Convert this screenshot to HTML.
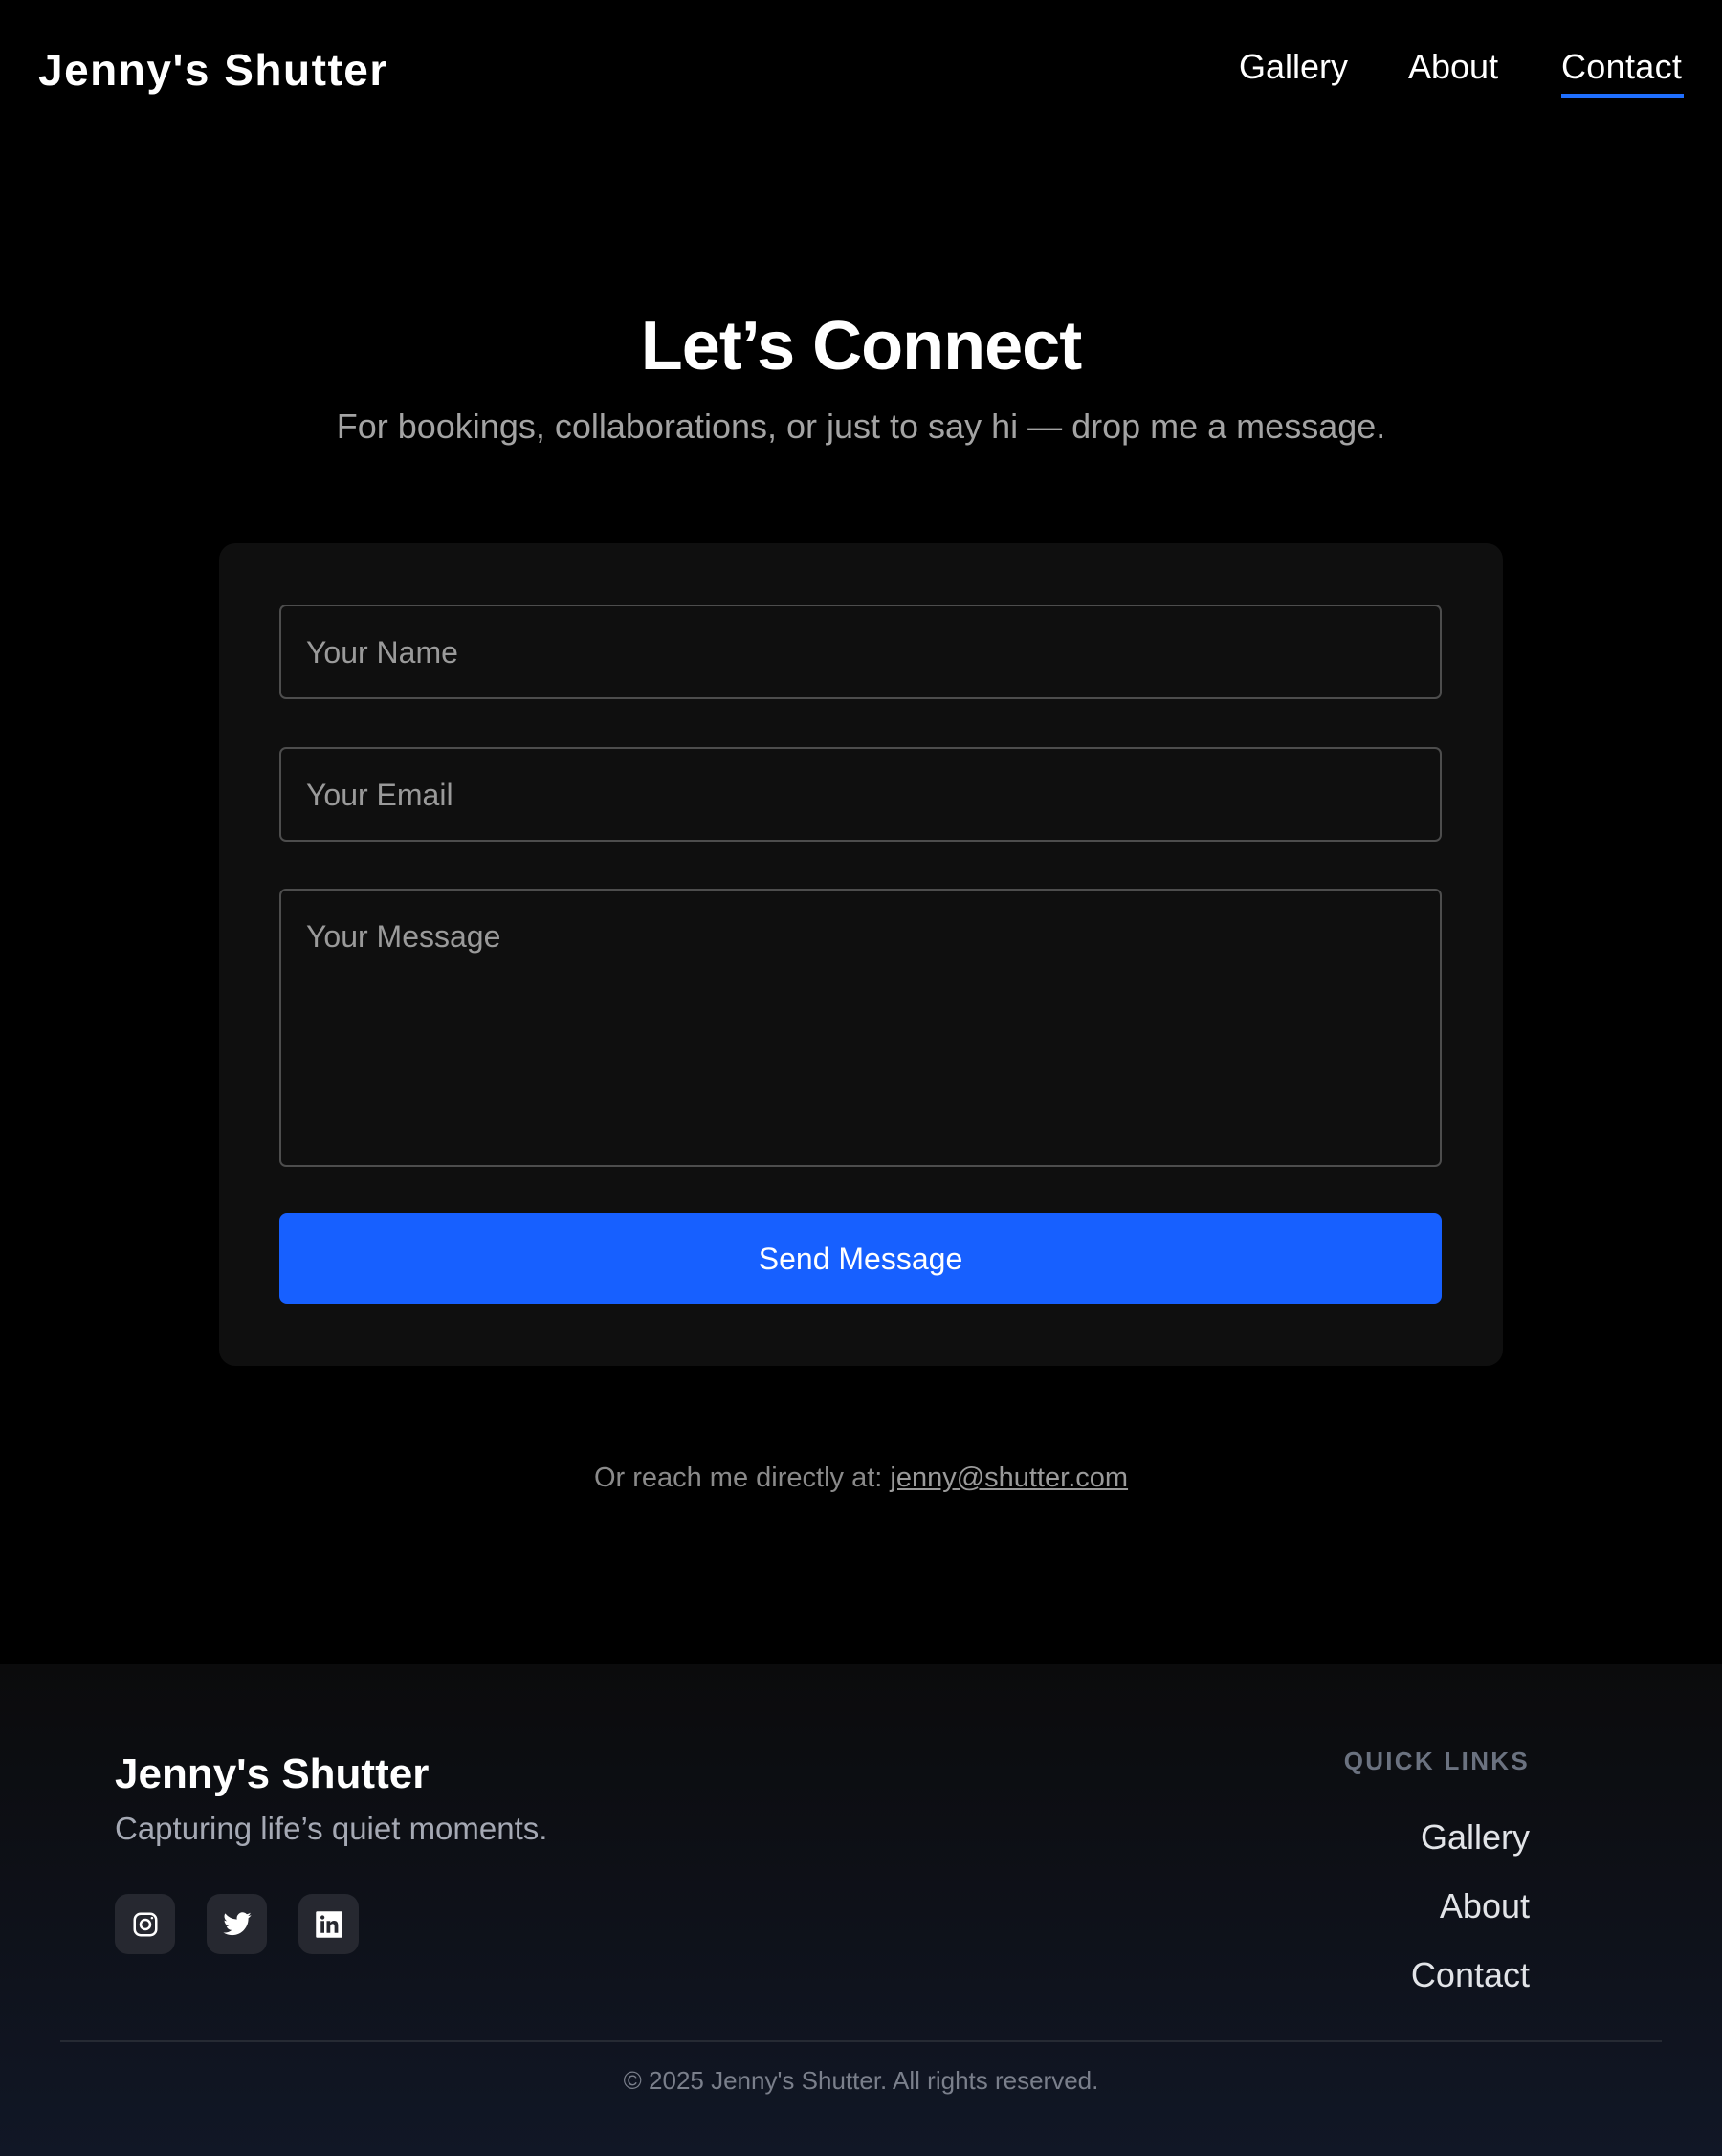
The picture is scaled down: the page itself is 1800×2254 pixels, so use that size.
<!DOCTYPE html>
<html><head><meta charset="utf-8"><style>
*{box-sizing:border-box;margin:0;padding:0}
body{width:1800px;height:2254px;background:#000;font-family:"Liberation Sans",sans-serif;color:#fff;position:relative;overflow:hidden}
.abs{position:absolute}
.logo{left:40px;top:46px;font-size:46px;font-weight:bold;letter-spacing:1.5px}
.nav{top:49px;font-size:36px;color:#fff}
.h1{left:0;width:1800px;text-align:center;top:321px;font-size:72px;font-weight:bold;letter-spacing:-1px}
.sub{left:0;width:1800px;text-align:center;top:425px;font-size:36px;color:#a3a3a3}
.card{left:229px;top:568px;width:1342px;height:860px;background:#0f0f0f;border-radius:17px}
.inp{left:292px;width:1215px;border:2px solid #4d4d4d;border-radius:7px;background:#0f0f0f;color:#9a9a9a;font-size:32px;padding-left:26px}
.btn{left:292px;top:1268px;width:1215px;height:95px;background:#1760ff;border-radius:8px;text-align:center;line-height:97px;font-size:32px;color:#fff}
.reach{left:0;width:1800px;text-align:center;top:1529px;font-size:29px;color:#8a8a8a}
.reach u{color:#9a9a9a}
.footer{left:0;top:1740px;width:1800px;height:514px;background:linear-gradient(#0b0b0c,#111726)}
.ic{top:1980px;width:63px;height:63px;background:#262830;border-radius:14px;display:flex;align-items:center;justify-content:center}
.ql{right:201px;text-align:right}
</style></head><body>
<div class="abs logo">Jenny's Shutter</div>
<div class="abs nav" style="left:1295px">Gallery</div>
<div class="abs nav" style="left:1472px">About</div>
<div class="abs nav" style="left:1632px;letter-spacing:0.3px">Contact</div>
<div class="abs" style="left:1632px;top:98px;width:128px;height:4px;background:#1f6fff"></div>

<div class="abs h1">Let’s Connect</div>
<div class="abs sub">For bookings, collaborations, or just to say hi — drop me a message.</div>

<div class="abs card"></div>
<div class="abs inp" style="top:632px;height:99px;line-height:97px">Your Name</div>
<div class="abs inp" style="top:781px;height:99px;line-height:97px">Your Email</div>
<div class="abs inp" style="top:929px;height:291px;padding-top:29px;line-height:1.2">Your Message</div>
<div class="abs btn">Send Message</div>

<div class="abs reach">Or reach me directly at: <u>jenny@shutter.com</u></div>

<div class="abs footer"></div>
<div class="abs" style="left:120px;top:1830px;font-size:44px;font-weight:bold">Jenny's Shutter</div>
<div class="abs" style="left:120px;top:1893px;font-size:33px;color:#a5a9b4">Capturing life’s quiet moments.</div>
<div class="abs ic" style="left:120px"><svg width="30" height="30" viewBox="0 0 24 24" fill="none" stroke="#fff" stroke-width="2"><rect x="3" y="3" width="18" height="18" rx="5"/><circle cx="12" cy="12" r="4"/><circle cx="17.5" cy="6.5" r="1" fill="#fff" stroke="none"/></svg></div>
<div class="abs ic" style="left:216px"><svg width="32" height="32" viewBox="0 0 24 24" fill="#fff"><path d="M23 4.6a9 9 0 0 1-2.6.7 4.5 4.5 0 0 0 2-2.5 9 9 0 0 1-2.9 1.1A4.5 4.5 0 0 0 11.8 8 12.8 12.8 0 0 1 2.5 3.3a4.5 4.5 0 0 0 1.4 6 4.5 4.5 0 0 1-2-.6 4.5 4.5 0 0 0 3.6 4.5 4.5 4.5 0 0 1-2 .1 4.5 4.5 0 0 0 4.2 3.1A9 9 0 0 1 1 18.3 12.8 12.8 0 0 0 7.9 20.3c8.3 0 12.8-6.9 12.8-12.8v-.6A9 9 0 0 0 23 4.6z"/></svg></div>
<div class="abs ic" style="left:312px"><svg width="30" height="30" viewBox="0 0 24 24"><rect x="1" y="1" width="22" height="22" rx="1" fill="#fff"/><rect x="5" y="9" width="3" height="10" fill="#262830"/><circle cx="6.5" cy="6" r="1.7" fill="#262830"/><path d="M10 9h3v1.5c.6-1 1.7-1.7 3.2-1.7 2.5 0 3.3 1.6 3.3 4V19h-3v-5.5c0-1.2-.4-2-1.6-2-1.3 0-1.9.9-1.9 2.2V19h-3z" fill="#262830"/></svg></div>

<div class="abs ql" style="top:1826px;font-size:26px;font-weight:bold;letter-spacing:2.3px;color:#6b7280">QUICK LINKS</div>
<div class="abs ql" style="top:1900px;font-size:36px;color:#e2e4e8">Gallery</div>
<div class="abs ql" style="top:1972px;font-size:36px;color:#e2e4e8">About</div>
<div class="abs ql" style="top:2044px;font-size:36px;color:#e2e4e8">Contact</div>

<div class="abs" style="left:63px;top:2133px;width:1674px;height:2px;background:#262a33"></div>
<div class="abs" style="left:0;width:1800px;text-align:center;top:2160px;font-size:26px;color:#7a7f8b">© 2025 Jenny's Shutter. All rights reserved.</div>
</body></html>
